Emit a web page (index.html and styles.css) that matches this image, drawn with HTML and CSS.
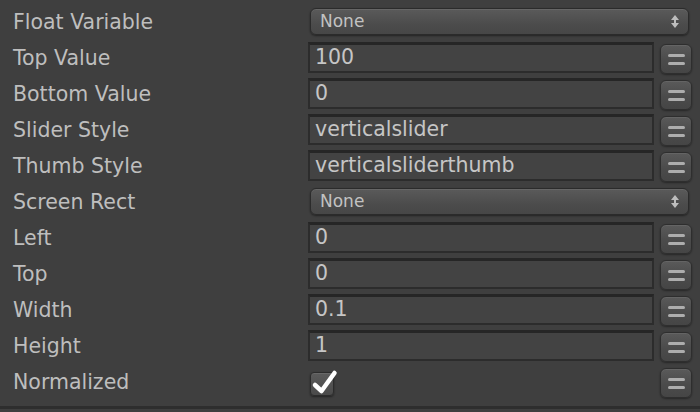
FILE: index.html
```html
<!DOCTYPE html>
<html>
<head>
<meta charset="utf-8">
<link rel="stylesheet" href="styles.css">
</head>
<body>
<div class="panel">
  <div class="row">
    <div class="label">Float Variable</div>
    <div class="popup"><span>None</span><svg class="updown" width="8" height="14" viewBox="0 0 8 14"><path d="M4 0 L8 5 L0 5 Z M0 8 L8 8 L4 13 Z" fill="#bdbdbd"/><rect x="3" y="5" width="2" height="3" fill="#bdbdbd"/></svg></div>
  </div>
  <div class="row">
    <div class="label">Top Value</div>
    <div class="field">100</div>
    <div class="btn"><i></i><i></i></div>
  </div>
  <div class="row">
    <div class="label">Bottom Value</div>
    <div class="field">0</div>
    <div class="btn"><i></i><i></i></div>
  </div>
  <div class="row">
    <div class="label">Slider Style</div>
    <div class="field">verticalslider</div>
    <div class="btn"><i></i><i></i></div>
  </div>
  <div class="row">
    <div class="label">Thumb Style</div>
    <div class="field">verticalsliderthumb</div>
    <div class="btn"><i></i><i></i></div>
  </div>
  <div class="row">
    <div class="label">Screen Rect</div>
    <div class="popup"><span>None</span><svg class="updown" width="8" height="14" viewBox="0 0 8 14"><path d="M4 0 L8 5 L0 5 Z M0 8 L8 8 L4 13 Z" fill="#bdbdbd"/><rect x="3" y="5" width="2" height="3" fill="#bdbdbd"/></svg></div>
  </div>
  <div class="row">
    <div class="label">Left</div>
    <div class="field">0</div>
    <div class="btn"><i></i><i></i></div>
  </div>
  <div class="row">
    <div class="label">Top</div>
    <div class="field">0</div>
    <div class="btn"><i></i><i></i></div>
  </div>
  <div class="row">
    <div class="label">Width</div>
    <div class="field">0.1</div>
    <div class="btn"><i></i><i></i></div>
  </div>
  <div class="row">
    <div class="label">Height</div>
    <div class="field">1</div>
    <div class="btn"><i></i><i></i></div>
  </div>
  <div class="row">
    <div class="label">Normalized</div>
    <div class="checkcell">
      <div class="check"><svg width="30" height="30" viewBox="0 0 30 30"><path d="M6 20 L12.5 26 L25.5 8" fill="none" stroke="#ffffff" stroke-width="4.5" stroke-linecap="round" stroke-linejoin="round"/></svg></div>
    </div>
    <div class="btn"><i></i><i></i></div>
  </div>
</div>
</body>
</html>
```
FILE: styles.css
```css
html, body {
  margin: 0;
  padding: 0;
  background: #3f3f3f;
}
.panel {
  width: 700px;
  height: 409px;
  box-sizing: border-box;
  padding-top: 4px;
  border-bottom: 3px solid #2e2e2e;
  background: #3f3f3f;
  font-family: "DejaVu Sans", sans-serif;
  color: #bebebe;
}
.row {
  display: grid;
  grid-template-columns: 302px 346px 32px;
  column-gap: 6px;
  height: 36px;
  align-items: start;
}
.label {
  font-size: 20.5px;
  padding-left: 13px;
  line-height: 36px;
  white-space: nowrap;
}
.popup {
  grid-column: 2 / 4;
  margin: 4px 3px 0 2px;
  height: 27px;
  box-sizing: border-box;
  border: 1px solid #2b2b2b;
  border-radius: 6px;
  background: linear-gradient(#5a5a5a, #4c4c4c 60%, #474747);
  box-shadow: inset 0 1px 0 #666, 0 1px 2px rgba(0,0,0,0.45);
  display: flex;
  align-items: center;
  justify-content: space-between;
  padding: 0 9px 0 9px;
  font-size: 17px;
  color: #c2c2c2;
}
.popup span { margin-top: -1px; }
.updown { display: block; }
.field {
  height: 31px;
  margin-top: 2px;
  box-sizing: border-box;
  border: 2px solid #2c2c2c;
  border-top-color: #262626;
  border-top-width: 3px;
  background: #434343;
  font-size: 20.5px;
  line-height: 25px;
  padding-left: 5px;
  color: #c6c6c6;
  white-space: nowrap;
  overflow: hidden;
}
.btn {
  grid-column: 3;
  width: 32px;
  height: 30px;
  margin-top: 4px;
  box-sizing: border-box;
  border: 1px solid #2e2e2e;
  border-radius: 6px;
  background: linear-gradient(#5a5a5a, #4b4b4b 55%, #454545);
  box-shadow: inset 0 1px 0 #646464, 0 1px 2px rgba(0,0,0,0.4);
  display: flex;
  flex-direction: column;
  align-items: center;
  justify-content: center;
  gap: 5px;
}
.btn i {
  display: block;
  width: 17px;
  height: 3px;
  border-radius: 2px;
  background: #adadad;
}
.checkcell {
  display: flex;
  padding-left: 2px;
}
.check {
  position: relative;
  width: 24px;
  height: 24px;
  margin-top: 8px;
  box-sizing: border-box;
  border: 1px solid #2c2c2c;
  border-radius: 4px;
  background: linear-gradient(#5b5b5b, #4a4a4a);
  box-shadow: inset 0 1px 0 #686868, 0 1px 2px rgba(0,0,0,0.45);
}
.check svg {
  position: absolute;
  left: -2px;
  top: -8px;
}
```
